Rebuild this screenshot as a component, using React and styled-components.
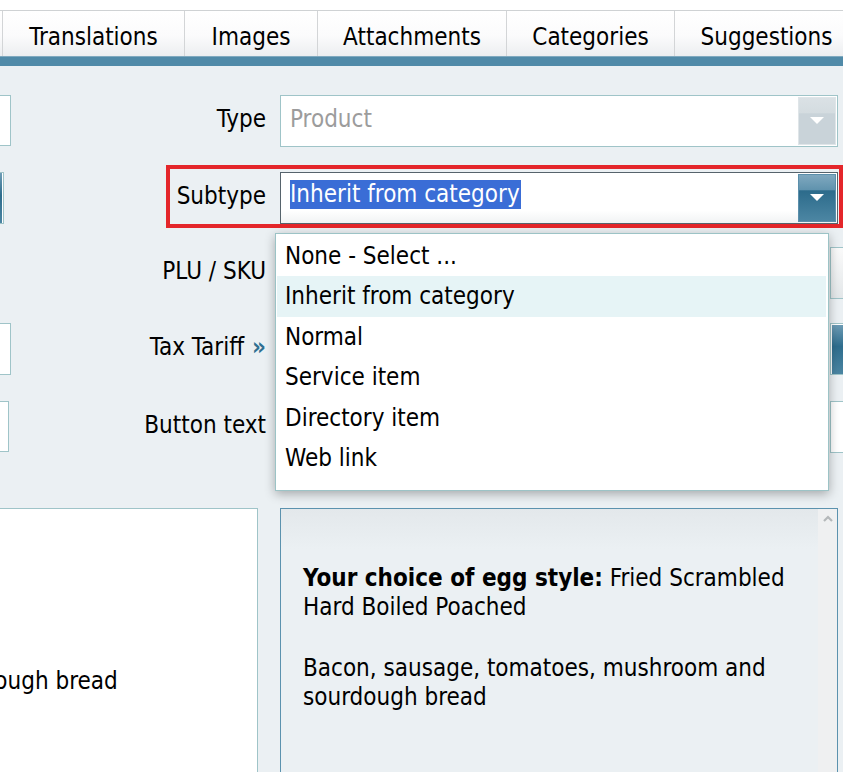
import React from 'react';
import styled, { createGlobalStyle } from 'styled-components';

const GlobalStyle = createGlobalStyle`
  html, body {
    margin: 0;
    padding: 0;
    background: #fff;
    overflow: hidden;
  }
  body {
    font-family: "DejaVu Sans Condensed", "DejaVu Sans", Verdana, sans-serif;
    font-stretch: condensed;
    color: #000;
  }
`;

const Page = styled.div`
    width: 843px;
    height: 772px;
    overflow: hidden;
    box-sizing: border-box;
    background: #ebf0f3;
    border-top: 10px solid #fff;
`;

const TabBar = styled.div`
    display: flex;
    height: 46px;
    box-sizing: border-box;
    border-top: 1px solid #cfd2d4;
    background: linear-gradient(#ffffff 0%, #fbfbfc 55%, #eceef0 100%);
    overflow: hidden;
`;

const Tab = styled.div`
    flex: none;
    width: ${props => props.$w}px;
    display: flex;
    align-items: center;
    justify-content: center;
    padding-top: 6px;
    box-sizing: border-box;
    border-right: 1px solid #d3d5d7;
    font-size: 24px;
    white-space: nowrap;
`;

const Strip = styled.div`
    height: 10px;
    box-sizing: border-box;
    background: #508aa8;
    border-top: 1px solid #7fa9bf;
`;

const Form = styled.div`
    display: flex;
    flex-direction: column;
    padding-top: 29px;
`;

const Row = styled.div`
    position: relative;
    display: grid;
    grid-template-columns: 266px 563px;
    column-gap: 14px;
    height: 52px;
    margin-top: ${props => props.$gap || 0}px;
    ${props => props.$highlight && `
    &::after {
        content: '';
        position: absolute;
        left: 166px;
        top: -7px;
        right: 0;
        bottom: -4px;
        border: 4px solid #e4262a;
        pointer-events: none;
    }
    `}
`;

const LabelCell = styled.div`
    display: flex;
    align-items: center;
    justify-content: space-between;
`;

const Stub = styled.div`
    flex: none;
    align-self: flex-start;
    width: ${props => props.$w}px;
    height: ${props => props.$h || 52}px;
    box-sizing: border-box;
    border: 1px solid #9fc4c8;
    border-left: none;
    background: ${props => props.$blue ? 'linear-gradient(#6f9db6, #2e6d8d 45%, #4b85a2)' : '#fff'};
    ${props => props.$blue && 'box-shadow: inset -1px 0 0 #fff;'}
`;

const Label = styled.div`
    font-size: 24px;
    white-space: nowrap;
    text-align: right;
    margin-left: auto;
    padding-bottom: 5px;
`;

const Chevrons = styled.span`
    color: #2f6f91;
    font-weight: bold;
    margin-left: 8px;
    font-size: 24px;
`;

const FieldCell = styled.div`
    display: flex;
    gap: 10px;
    align-items: stretch;
`;

const Field = styled.div`
    position: relative;
    flex: none;
    width: ${props => props.$w}px;
    height: 52px;
    box-sizing: border-box;
    display: flex;
    align-items: center;
    padding-left: 9px;
    border: 1px solid ${props => props.$focus ? '#56636c' : '#9fc4c8'};
    background: ${props => props.$focus ? 'linear-gradient(#fff 75%, #f1f3f4)' : '#fff'};
    font-size: 24px;
`;

const Placeholder = styled.span`
    flex: 1;
    color: #9c9c9c;
    padding-bottom: 5px;
`;

const Value = styled.span`
    flex: 1;
    padding-bottom: 8px;
`;

const Selected = styled.span`
    background: #3a6dd6;
    color: #fff;
    line-height: 29px;
    display: inline-block;
    padding: 0 1px 0 0;
`;

const DropButton = styled.div`
    flex: none;
    width: 38px;
    height: 48px;
    margin-right: 1px;
    box-sizing: border-box;
    display: flex;
    align-items: center;
    justify-content: center;
    border: 1px solid ${props => props.$disabled ? '#dfe5e8' : '#5b8fab'};
    background: ${props => props.$disabled
        ? 'linear-gradient(#dae1e5 0%, #d4dce0 33%, #c9d3d9 34%, #c9d3d9 100%)'
        : 'linear-gradient(#7fa8bf 0%, #5f92ad 33%, #2c6b8b 34%, #4c86a3 100%)'};
`;

const SideBox = styled.div`
    flex: 1;
    box-sizing: border-box;
    border: 1px solid #9fc4c8;
    border-right: none;
    background: ${props => props.$kind === 'blue'
        ? 'linear-gradient(#6f9db6, #2e6d8d 45%, #4b85a2)'
        : props.$kind === 'grey' ? 'linear-gradient(#fafafa, #e3e7e9)' : '#fff'};
    ${props => props.$kind === 'blue' && 'box-shadow: inset 1px 1px 0 #fff;'}
`;

const Menu = styled.div`
    position: absolute;
    left: -6px;
    top: 60px;
    width: 554px;
    height: 258px;
    box-sizing: border-box;
    padding: 2px 2px 0 1px;
    background: #fff;
    border: 1px solid #9cc3c6;
    box-shadow: 0 3px 10px rgba(0, 0, 0, 0.3);
    z-index: 5;
`;

const MenuItem = styled.div`
    height: 40.4px;
    line-height: 40.4px;
    padding-left: 8px;
    font-size: 24px;
    white-space: nowrap;
    background: ${props => props.$active ? '#e6f4f6' : 'transparent'};
`;

const Panels = styled.div`
    display: grid;
    grid-template-columns: 258px 558px;
    column-gap: 22px;
    margin-top: 55px;
    height: 300px;
`;

const LeftPanel = styled.div`
    box-sizing: border-box;
    background: #fff;
    border: 1px solid #9fc4c8;
    border-left: none;
    overflow: hidden;
    padding-top: 158px;
    font-size: 24px;
    line-height: 29px;
`;

const ClippedLine = styled.div`
    margin-left: -66px;
    white-space: nowrap;
`;

const RightPanel = styled.div`
    box-sizing: border-box;
    display: flex;
    border: 1px solid #5b92ae;
    background: linear-gradient(#e3e8eb, #ebf0f3 40px);
`;

const Description = styled.div`
    flex: 1;
    padding: 55px 0 0 22px;
    font-size: 24px;
    line-height: 29px;
    p {
        margin: 0 0 32px;
    }
`;

const Scrollbar = styled.div`
    flex: none;
    width: 19px;
    background: #eff0f1;
    display: flex;
    justify-content: center;
    padding-top: 6px;
    box-sizing: border-box;
`;

const Triangle = () => (
    <svg width="14" height="8" viewBox="0 0 14 8">
        <polygon points="0,0 14,0 7,7" fill="#fff" />
    </svg>
);

const ScrollUp = () => (
    <svg width="10" height="7" viewBox="0 0 10 7">
        <polyline points="1,6 5,2 9,6" fill="none" stroke="#b4b8ba" strokeWidth="2.2" />
    </svg>
);

const tabs = [
    { label: '', w: 3 },
    { label: 'Translations', w: 182 },
    { label: 'Images', w: 133 },
    { label: 'Attachments', w: 189 },
    { label: 'Categories', w: 168 },
    { label: 'Suggestions', w: 184 },
];

const options = [
    'None - Select ...',
    'Inherit from category',
    'Normal',
    'Service item',
    'Directory item',
    'Web link',
];

const App = () => {
    return (
        <Page>
            <GlobalStyle />
            <TabBar>
                {tabs.map((t, i) => (
                    <Tab key={i} $w={t.w}>{t.label}</Tab>
                ))}
            </TabBar>
            <Strip />
            <Form>
                <Row>
                    <LabelCell>
                        <Stub $w={11} $h={51} />
                        <Label>Type</Label>
                    </LabelCell>
                    <FieldCell>
                        <Field $w={558}>
                            <Placeholder>Product</Placeholder>
                            <DropButton $disabled><Triangle /></DropButton>
                        </Field>
                    </FieldCell>
                </Row>
                <Row $highlight $gap={25}>
                    <LabelCell>
                        <Stub $w={4} $blue />
                        <Label>Subtype</Label>
                    </LabelCell>
                    <FieldCell>
                        <Field $w={558} $focus>
                            <Value><Selected>Inherit from category</Selected></Value>
                            <DropButton><Triangle /></DropButton>
                            <Menu>
                                {options.map((o, i) => (
                                    <MenuItem key={o} $active={i === 1}>{o}</MenuItem>
                                ))}
                            </Menu>
                        </Field>
                    </FieldCell>
                </Row>
                <Row $gap={23}>
                    <LabelCell>
                        <Label>PLU / SKU</Label>
                    </LabelCell>
                    <FieldCell>
                        <Field $w={540} />
                        <SideBox $kind="grey" />
                    </FieldCell>
                </Row>
                <Row $gap={24}>
                    <LabelCell>
                        <Stub $w={11} />
                        <Label>Tax Tariff<Chevrons>»</Chevrons></Label>
                    </LabelCell>
                    <FieldCell>
                        <Field $w={540} />
                        <SideBox $kind="blue" />
                    </FieldCell>
                </Row>
                <Row $gap={26}>
                    <LabelCell>
                        <Stub $w={9} $h={51} />
                        <Label>Button text</Label>
                    </LabelCell>
                    <FieldCell>
                        <Field $w={540} />
                        <SideBox />
                    </FieldCell>
                </Row>
            </Form>
            <Panels>
                <LeftPanel>
                    <ClippedLine>sourdough bread</ClippedLine>
                </LeftPanel>
                <RightPanel>
                    <Description>
                        <p><b>Your choice of egg style:</b> Fried Scrambled<br />Hard Boiled Poached</p>
                        <p>Bacon, sausage, tomatoes, mushroom and<br />sourdough bread</p>
                    </Description>
                    <Scrollbar><ScrollUp /></Scrollbar>
                </RightPanel>
            </Panels>
        </Page>
    );
};

export default App;
